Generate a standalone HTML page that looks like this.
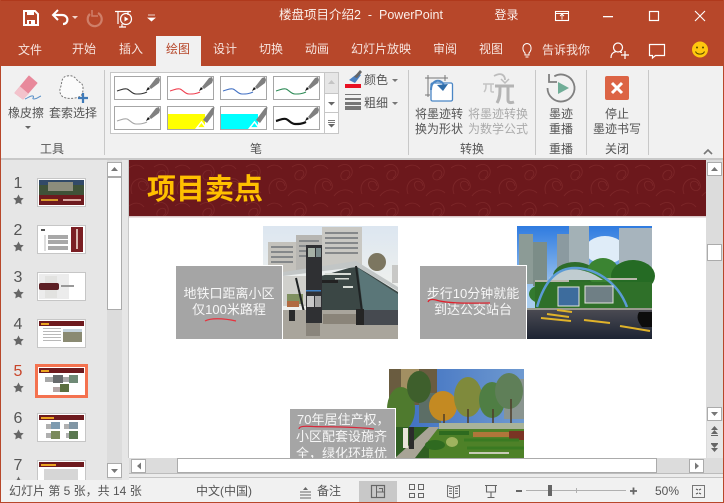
<!DOCTYPE html>
<html lang="zh"><head><meta charset="utf-8"><title>楼盘项目介绍2 - PowerPoint</title>
<style>
html,body{margin:0;padding:0;width:724px;height:503px;overflow:hidden;background:#f1f1f1}
body{position:relative;font-family:"Liberation Sans","Microsoft YaHei","Noto Sans CJK SC",sans-serif;font-size:12px;color:#444}
.a{position:absolute}
.t{position:absolute;white-space:nowrap;line-height:16px;height:16px;text-align:center}
.w{color:#f7e4de}
.g{color:#555}
.d{color:#aaa}
.sl{color:#f6f6f6;font-size:13px}
svg{position:absolute;overflow:visible}
</style></head><body>

<div class="a" style="left:0;top:0;width:724px;height:66px;background:#b7472a"></div>
<div class="a" style="left:156px;top:36px;width:45px;height:30px;background:#f1f1f1"></div>
<div class="a" style="left:0;top:66px;width:724px;height:92px;background:#f1f1f1"></div>
<div class="a" style="left:0;top:158px;width:724px;height:2px;background:#c8c8c8"></div>
<div class="a" style="left:1px;top:160px;width:128px;height:320px;background:#e6e6e6"></div>
<div class="a" style="left:107px;top:160px;width:15px;height:320px;background:#dcdcdc"></div>
<div class="a" style="left:129px;top:160px;width:577px;height:298px;background:#fff"></div>
<div class="a" style="left:706px;top:160px;width:17px;height:298px;background:#dcdcdc"></div>

<!-- title -->
<div class="t w" style="left:279px;top:7px;width:167px;font-size:12.5px;text-align:left;color:#fbeee9">楼盘项目介绍2&nbsp; -&nbsp; PowerPoint</div>
<div class="t w" style="left:494px;top:7px;width:25px;color:#fbeee9">登录</div>
<!-- tabs -->
<div class="t w" style="left:17px;top:42px;width:26px">文件</div>
<div class="t w" style="left:71px;top:41px;width:26px">开始</div>
<div class="t w" style="left:118px;top:41px;width:26px">插入</div>
<div class="t" style="left:165px;top:41px;width:26px;color:#b7472a">绘图</div>
<div class="t w" style="left:212px;top:41px;width:26px">设计</div>
<div class="t w" style="left:258px;top:41px;width:26px">切换</div>
<div class="t w" style="left:304px;top:41px;width:26px">动画</div>
<div class="t w" style="left:350px;top:41px;width:62px">幻灯片放映</div>
<div class="t w" style="left:432px;top:41px;width:26px">审阅</div>
<div class="t w" style="left:478px;top:41px;width:26px">视图</div>
<div class="t w" style="left:541px;top:42px;width:50px">告诉我你</div>

<!-- ribbon text -->
<div class="t g" style="left:7px;top:105px;width:38px">橡皮擦</div>
<div class="t g" style="left:48px;top:105px;width:50px">套索选择</div>
<div class="t g" style="left:39px;top:141px;width:26px">工具</div>
<div class="t g" style="left:249px;top:141px;width:14px">笔</div>
<div class="t g" style="left:363px;top:72px;width:26px">颜色</div>
<div class="t g" style="left:363px;top:95px;width:26px">粗细</div>
<div class="t g" style="left:414px;top:106px;width:50px">将墨迹转</div>
<div class="t g" style="left:414px;top:121px;width:50px">换为形状</div>
<div class="t d" style="left:467px;top:106px;width:62px">将墨迹转换</div>
<div class="t d" style="left:467px;top:121px;width:62px">为数学公式</div>
<div class="t g" style="left:459px;top:141px;width:26px">转换</div>
<div class="t g" style="left:548px;top:106px;width:26px">墨迹</div>
<div class="t g" style="left:548px;top:121px;width:26px">重播</div>
<div class="t g" style="left:548px;top:141px;width:26px">重播</div>
<div class="t g" style="left:604px;top:106px;width:26px">停止</div>
<div class="t g" style="left:592px;top:121px;width:50px">墨迹书写</div>
<div class="t g" style="left:604px;top:141px;width:26px">关闭</div>

<!-- ribbon & chrome graphics -->
<svg width="724" height="503" style="left:0;top:0" viewBox="0 0 724 503" fill="none">
<defs>
<g id="pen"><path d="M2-3L9-12L12-13L13-10L12-7L4-1Z" fill="#808080"/><path d="M-1 1L1-3L3-1Z" fill="#111"/></g>
</defs>
<rect x="0" y="0" width="724" height="1" fill="#b0391c"/>
<rect x="0" y="0" width="1" height="503" fill="#b7472a"/>
<rect x="723" y="0" width="1" height="503" fill="#b7472a"/>
<rect x="0" y="502" width="724" height="1" fill="#b7472a"/>
<!-- save -->
<path d="M24 11h11l3 3v11H24z" stroke="#fff" stroke-width="2"/><rect x="27" y="11" width="7" height="4" fill="#fff"/><rect x="27" y="20" width="8" height="5" fill="#fff"/><rect x="29" y="21" width="2" height="3" fill="#b7472a"/>
<!-- undo -->
<path d="M54 15h8c7 0 7 9 1 9" stroke="#fff" stroke-width="2.2"/><path d="M58 10l-5 5 5 5" stroke="#fff" stroke-width="2"/><path d="M72 16h6l-3 3z" fill="#f3d6cc"/>
<!-- redo dim -->
<path d="M98 13a7 7 0 1 1-8 1" stroke="#cf7f69" stroke-width="2.2"/><path d="M92 10v6h6" stroke="#cf7f69" stroke-width="1.5"/>
<!-- presenter -->
<path d="M115 11.500h16M118 12v12M128 12v3M122 24v3M119 27h7" stroke="#fff" stroke-width="1.200"/><circle cx="126" cy="19" r="5.500" stroke="#fff" stroke-width="1.200"/><path d="M124.500 16.500l4 2.500-4 2.500z" fill="#fff"/>
<path d="M148 15h7M148 18h7l-3.500 3z" fill="#fff" stroke="#fff" stroke-width=".7"/>
<!-- window controls -->
<rect x="555.500" y="11.500" width="13" height="9" stroke="#fff" stroke-width="1.100"/><path d="M562 19.500v-5M560 16l2-2 2 2M556 13.500h12" stroke="#fff" stroke-width=".9"/>
<rect x="603" y="16" width="10" height="1.300" fill="#fff"/>
<rect x="649.500" y="11.500" width="9" height="9" stroke="#fff" stroke-width="1.200"/>
<path d="M695 11l10 10M705 11l-10 10" stroke="#fff" stroke-width="1.100"/>
<!-- tell me bulb -->
<path d="M525 53c-3-3-3-9 2-9.500 5 .5 5 6.500 2 9.500v2h-4z" stroke="#fff" stroke-width="1"/><path d="M525.500 57h3" stroke="#fff"/>
<!-- person -->
<circle cx="618" cy="47.500" r="4.500" stroke="#fff" stroke-width="1.200"/><path d="M611 58c0-5 3-6 5-6.500M620 52l2 .5M621 55h8M625 51v8" stroke="#fff" stroke-width="1.200"/>
<!-- comment -->
<path d="M649.500 44.500h15v11h-9l-3 2.500v-2.500h-3z" stroke="#fff" stroke-width="1.200"/>
<!-- smiley -->
<circle cx="700" cy="49.500" r="8" fill="#ffc90e"/><circle cx="697" cy="47.500" r="1" fill="#5a4a00"/><circle cx="703" cy="47.500" r="1" fill="#5a4a00"/><path d="M695.500 51.500c1.500 3.500 7.500 3.500 9 0" stroke="#5a4a00"/>

<!-- eraser -->
<path d="M29 76L37 83L23 99L15 93Z" fill="#e8899b" stroke="#e8899b" stroke-linejoin="round"/>
<path d="M20 87L28 94L23 99L15 93Z" fill="#f3c3cc" stroke="#f3c3cc" stroke-linejoin="round"/>
<path d="M25 99c3-1 6-4 8-3s-2 3 1 3 4-2 7-3" stroke="#5b92c9" stroke-width="1"/>
<path d="M25 126h6l-3 3z" fill="#666"/>
<!-- lasso -->
<path d="M67 76c5-1 8 1 10 4s6 2 6 8-1 9-8 10-12 0-14-3c-2-4-1-6 0-9s0-9 6-10z" fill="#fbfbfb" stroke="#777" stroke-dasharray="2 1.500"/>
<path d="M83 94v10M78 99h10" stroke="#3f7ab8" stroke-width="2.200" transform="translate(0 -1)"/>
<!-- separators -->
<path d="M104.500 70v85M408.500 70v85M535.500 70v85M586.500 70v85M648.500 70v85" stroke="#c8c8c8"/>
<!-- gallery -->
<rect x="110.500" y="72.500" width="228" height="61" fill="#fff" stroke="#c6c6c6"/>
<rect x="324.500" y="72.500" width="14" height="21" fill="#e6e6e6" stroke="#c6c6c6"/>
<path d="M324.500 93.500h14M324.500 112.500h14M324.500 72v62" stroke="#c6c6c6"/>
<path d="M328 84l3.500-4 3.500 4z" fill="#c4c4c4"/>
<path d="M328 102h7l-3.500 3.500z" fill="#666"/>
<path d="M328 120.500h7M328 122.500h7" stroke="#777"/><path d="M328 124h7l-3.500 3.500z" fill="#666"/>
<g stroke="#a6a6a6" fill="#fff">
<rect x="114.500" y="76.500" width="46" height="23"/><rect x="167.500" y="76.500" width="46" height="23"/><rect x="220.500" y="76.500" width="46" height="23"/><rect x="273.500" y="76.500" width="46" height="23"/>
<rect x="114.500" y="106.500" width="46" height="23"/><rect x="167.500" y="106.500" width="46" height="23"/><rect x="220.500" y="106.500" width="46" height="23"/><rect x="273.500" y="106.500" width="46" height="23"/>
</g>
<rect x="168" y="114" width="37" height="15" fill="#ff0"/><rect x="221" y="114" width="37" height="15" fill="#0ff"/>
<g stroke-width="1.100">
<path d="M117 91c4-1 7-3 10-2s5 5 9 5 7 0 11-2" stroke="#333"/>
<path d="M170 91c4-1 7-3 10-2s5 5 9 5 7 0 11-2" stroke="#f04050"/>
<path d="M223 91c4-1 7-3 10-2s5 5 9 5 7 0 11-2" stroke="#4472c4"/>
<path d="M276 91c4-1 7-3 10-2s5 5 9 5 7 0 11-2" stroke="#2e8b57"/>
<path d="M117 121c4-1 7-3 10-2s5 5 9 5 7 0 11-2" stroke="#a6a6a6"/>
<path d="M276 121c4-1 7-3 10-2s5 5 9 5 7 0 11-2" stroke="#111" stroke-width="2.200"/>
</g>
<use href="#pen" x="147" y="90"/>
<use href="#pen" x="200" y="90"/>
<use href="#pen" x="253" y="90"/>
<use href="#pen" x="306" y="90"/>
<use href="#pen" x="147" y="120"/>
<use href="#pen" x="306" y="120"/>
<path d="M196 128.500l5.500-7 5.500 7z" fill="#fff" stroke="#fff"/><path d="M197.500 127.500l4-5 3.800 5z" fill="#ff0" stroke="#fff" stroke-width=".7"/>
<path d="M249 128.500l5.500-7 5.500 7z" fill="#fff" stroke="#fff"/><path d="M250.500 127.500l4-5 3.800 5z" fill="#0ff" stroke="#fff" stroke-width=".7"/>
<path d="M203 120L212 108L214.500 107L213.500 114L207 123ZM256 120L265 108L267.500 107L266.500 114L260 123Z" fill="#808080"/>
<!-- colour / thickness -->
<path d="M349 80l9-7 3 2-6 8z" fill="#4a7fc0"/><path d="M354 77l6-7 2 2-5 6z" fill="#666"/>
<rect x="345" y="84" width="16" height="4" fill="#e81123"/>
<rect x="345" y="94" width="16" height="1" fill="#777"/><rect x="345" y="98" width="16" height="2" fill="#777"/><rect x="345" y="102" width="16" height="3" fill="#777"/><rect x="345" y="106" width="16" height="4" fill="#777"/>
<path d="M392 79h6l-3 3zM392 102h6l-3 3z" fill="#777"/>
<!-- ink to shape -->
<path d="M428 75v22M425 95h5M425 78h23M445 75v6" stroke="#777"/>
<rect x="431" y="83" width="21.500" height="18" rx="1.500" fill="#fff" stroke="#4a86c5" stroke-width="1.300"/>
<path d="M431 90c0-11 11-12 13-4" stroke="#4a86c5" stroke-width="2"/><path d="M437 85l6 6 5-7z" fill="#2f6ca8"/>
<!-- pi -->
<path d="M483 84h11M486 84c0 4 0 6-2 8M491 84v7c0 1 1 1 3 1" stroke="#c4c4c4" stroke-width="1.500"/>
<path d="M495 86h19M500 86c0 7 0 12-3 17M508 86v14c0 3 3 3 6 2" stroke="#b4b4b4" stroke-width="3"/>
<path d="M494 76c7-4 11-1 11 4" stroke="#bdbdbd" stroke-width="1.800"/><path d="M501 79l4 4 4-4" stroke="#bdbdbd" stroke-width="1.500"/>
<!-- replay -->
<path d="M554.300 76.300A13.500 13.500 0 1 1 547.500 88" stroke="#808080" stroke-width="1.800"/><path d="M549 74v8h8" stroke="#808080" stroke-width="1.800"/>
<path d="M558 82l11 6-11 6z" fill="#70ad97"/>
<!-- stop -->
<rect x="605" y="76" width="24" height="24" rx="2" fill="#dc6445"/>
<path d="M612 83l10 10M622 83l-10 10" stroke="#fff" stroke-width="3"/>
<path d="M704 154l4-4 4 4" stroke="#777" stroke-width="1.600"/>

<!-- slide area edge lines -->
<rect x="122" y="160" width="7" height="320" fill="#e6e6e6"/>
<rect x="128" y="160" width="1" height="298" fill="#c8c8c8"/>

<!-- slide scroll left -->
<g fill="#fff" stroke="#ababab"><rect x="107.500" y="162.500" width="14" height="14"/><rect x="107.500" y="177.500" width="14" height="132"/><rect x="107.500" y="463.500" width="14" height="14"/></g>
<path d="M111 171l3.500-4 3.500 4z" fill="#777"/><path d="M111 469h7l-3.500 4z" fill="#777"/>

<!-- thumbnails -->
<g>
<rect x="37.500" y="178.500" width="48" height="28" fill="#fff" stroke="#c6c6c6"/>
<rect x="39" y="180" width="45" height="16" fill="#3f5238"/><rect x="39" y="180" width="45" height="5" fill="#324a68"/><rect x="48" y="182" width="25" height="9" fill="#8d8d7c"/>
<rect x="39" y="195" width="45" height="10" fill="#6e1a1e"/><rect x="41" y="199" width="17" height="2" fill="#d79a2c"/><rect x="63" y="199" width="18" height="2" fill="#d8a8a0"/>

<rect x="37.500" y="225.500" width="48" height="28" fill="#fff" stroke="#c6c6c6"/>
<rect x="71" y="227" width="12" height="25" fill="#7b1f24"/><rect x="76" y="229" width="2" height="20" fill="#d9b7b0"/>
<rect x="48" y="235" width="20" height="4" fill="#a8a8a8"/><rect x="48" y="240" width="20" height="4" fill="#a8a8a8"/><rect x="48" y="246" width="20" height="4" fill="#a8a8a8"/>
<rect x="41" y="229" width="4" height="2" fill="#555"/><rect x="44" y="235" width="2" height="16" fill="#ddd"/>

<rect x="37.500" y="272.500" width="48" height="28" fill="#fff" stroke="#c6c6c6"/>
<rect x="39" y="274" width="30" height="25" fill="#ececec"/><rect x="45" y="276" width="12" height="22" fill="#e2e2e0"/>
<rect x="39" y="283" width="20" height="7" rx="2" fill="#5c1f24"/><rect x="61" y="285" width="13" height="2" fill="#999"/>

<rect x="37.500" y="319.500" width="48" height="28" fill="#fff" stroke="#c6c6c6"/>
<rect x="39" y="321" width="45" height="5" fill="#6e1a1e"/><rect x="41" y="323" width="8" height="2" fill="#eaa420"/>
<g fill="#b9b9b9"><rect x="43" y="328" width="18" height="1"/><rect x="43" y="331" width="18" height="1"/><rect x="43" y="334" width="18" height="1"/><rect x="43" y="337" width="18" height="1"/><rect x="43" y="340" width="18" height="1"/></g>
<rect x="63" y="329" width="19" height="13" fill="#8a8a72"/><rect x="63" y="329" width="19" height="3" fill="#c5d3dd"/>

<rect x="36.500" y="365.500" width="50" height="31" fill="#fff" stroke="#f4724f" stroke-width="3"/>
<rect x="39" y="368" width="45" height="5" fill="#6e1a1e"/><rect x="41" y="370" width="8" height="2" fill="#eaa420"/>
<rect x="45" y="377" width="9" height="5" fill="#a8a8a8"/><rect x="53" y="375" width="10" height="8" fill="#676a6c"/>
<rect x="63" y="377" width="7" height="5" fill="#a8a8a8"/><rect x="69" y="375" width="9" height="8" fill="#6f8a76"/>
<rect x="53" y="387" width="7" height="5" fill="#b4a6a6"/><rect x="60" y="384" width="9" height="8" fill="#5c7040"/>

<rect x="37.500" y="413.500" width="48" height="28" fill="#fff" stroke="#c6c6c6"/>
<rect x="39" y="415" width="45" height="5" fill="#6e1a1e"/><rect x="41" y="417" width="13" height="2" fill="#eaa420"/>
<rect x="46" y="424" width="5" height="5" fill="#b0b0b0"/><rect x="51" y="422" width="9" height="7" fill="#7d9bb0"/><rect x="64" y="424" width="5" height="5" fill="#b0b0b0"/><rect x="69" y="422" width="9" height="7" fill="#8096a5"/>
<rect x="46" y="433" width="5" height="5" fill="#b0b0b0"/><rect x="51" y="431" width="9" height="8" fill="#7a8a5c"/><rect x="66" y="433" width="5" height="5" fill="#b0b0b0"/><rect x="69" y="431" width="9" height="8" fill="#5a7850"/>

<rect x="37.500" y="460.500" width="48" height="28" fill="#fff" stroke="#c6c6c6"/>
<rect x="39" y="462" width="45" height="5" fill="#6e1a1e"/><rect x="41" y="464" width="15" height="2" fill="#eaa420"/>
<rect x="44" y="469" width="34" height="11" fill="#d6d6d6"/>
</g>

<!-- stars -->
<g fill="#666">
<path id="st" d="M18.500 194.500l1.600 3.300 3.600.5-2.600 2.500.6 3.600-3.200-1.700-3.200 1.700.6-3.600-2.600-2.500 3.600-.5z"/>
<use href="#st" y="47"/><use href="#st" y="94"/><use href="#st" y="141"/><use href="#st" y="188"/><use href="#st" y="235"/><use href="#st" y="282"/>
</g>

<!-- right scrollbar -->
<rect x="707" y="421" width="16" height="37" fill="#e6e6e6"/>
<g fill="#fff" stroke="#ababab"><rect x="707.500" y="162.500" width="14" height="13"/><rect x="707.500" y="244.500" width="14" height="16"/><rect x="707.500" y="407.500" width="14" height="13"/></g>
<path d="M711 171l3.500-4 3.500 4z" fill="#777"/><path d="M711 412h7l-3.500 4z" fill="#777"/>
<path d="M711 430l3.500-4 3.500 4zM711 434l3.500-4 3.500 4z" fill="#666"/><path d="M711 444h7l-3.500 4zM711 448h7l-3.500 4z" fill="#666"/><rect x="711" y="435" width="7" height="1" fill="#666"/><rect x="711" y="443" width="7" height="1" fill="#666"/>

<!-- bottom scroll -->
<rect x="129" y="458" width="594" height="15" fill="#dcdcdc"/>
<rect x="131.500" y="459.500" width="14" height="13" fill="#fff" stroke="#ababab"/>
<rect x="177.500" y="458.500" width="479" height="14" fill="#fff" stroke="#ababab"/>
<rect x="689.500" y="459.500" width="14" height="13" fill="#fff" stroke="#ababab"/>
<path d="M141 462.500v7l-4-3.500zM695 462.500v7l4-3.500z" fill="#777"/>
<path d="M129 473.500h594" stroke="#bcbcbc"/>
<rect x="129" y="474" width="594" height="3" fill="#ececec"/>
<path d="M129 477.500h594" stroke="#c4c4c4"/>
<rect x="129" y="478" width="594" height="3" fill="#f1f1f1"/>
<rect x="1" y="480" width="722" height="22" fill="#f1f1f1"/>

<!-- status icons -->
<rect x="359" y="481" width="38" height="21" fill="#c8c8c8"/>
<path d="M300 492h11M300 495h11M300 498h11" stroke="#666"/><path d="M303 490l2.500-3 2.500 3z" fill="#666"/>
<rect x="371.500" y="485.500" width="13" height="12" stroke="#666" stroke-width="1.200"/><path d="M376.500 486v11M376.500 492h8M379 488.500h3.500v3.500H379" stroke="#666"/>
<rect x="409.500" y="484.500" width="5" height="5" stroke="#666"/><rect x="418.500" y="484.500" width="5" height="5" stroke="#666"/><rect x="409.500" y="493.500" width="5" height="4" stroke="#666"/><rect x="418.500" y="493.500" width="5" height="4" stroke="#666"/>
<path d="M447.500 485.500l6 1.500 6-1.500v11l-6 1.500-6-1.500zM453.500 487v11M449 488.500h3M449 491h3M449 493.500h3M455 488.500h3M455 491h3M455 493.500h3" stroke="#666" stroke-width=".9"/>
<path d="M485 485.500h12M486.500 486v6h9v-6M491 492v5M487.500 497.500h7" stroke="#666" stroke-width="1.100"/>
<rect x="516" y="490" width="6" height="2" fill="#666"/>
<path d="M526 490.500h100" stroke="#b0b0b0"/><path d="M576.500 488v5" stroke="#b0b0b0"/>
<rect x="548" y="485" width="4" height="11" fill="#666"/>
<path d="M630 491h7M633.500 487.500v7" stroke="#666" stroke-width="1.800"/>
<rect x="692.500" y="485.500" width="12" height="12" stroke="#777"/><path d="M696 489l2 1M701 489l-2 1M696 494l2-1M701 494l-2-1" stroke="#555"/>
</svg>

<!-- numbers -->
<div class="t" style="left:8px;top:175px;width:20px;font-size:16px;line-height:18px;color:#555">1</div>
<div class="t" style="left:8px;top:222px;width:20px;font-size:16px;line-height:18px;color:#555">2</div>
<div class="t" style="left:8px;top:269px;width:20px;font-size:16px;line-height:18px;color:#555">3</div>
<div class="t" style="left:8px;top:316px;width:20px;font-size:16px;line-height:18px;color:#555">4</div>
<div class="t" style="left:8px;top:363px;width:20px;font-size:16px;line-height:18px;color:#c8452a">5</div>
<div class="t" style="left:8px;top:410px;width:20px;font-size:16px;line-height:18px;color:#555">6</div>
<div class="t" style="left:8px;top:457px;width:20px;font-size:16px;line-height:18px;color:#555">7</div>

<!-- slide -->
<div class="a" style="left:129px;top:160px;width:577px;height:298px;overflow:hidden;background:#fff">
  <svg width="577" height="298" style="left:0;top:0" viewBox="0 0 577 298">
    <defs>
      <pattern id="dm" width="46" height="38" patternUnits="userSpaceOnUse">
        <path d="M3 34c-5-13 10-20 15-12s-5 12-8 5 7-8 8-1M25 7c11-8 19 5 11 11s-11-4-5-7 8 4 3 7M21 36c5-7 14-8 19-3M0 8c5-4 11-4 15 1" fill="none" stroke="#7d2729" stroke-width=".8"/>
      </pattern>
      <linearGradient id="sky1" x1="0" y1="0" x2="0" y2="1"><stop offset="0" stop-color="#dce6f0"/><stop offset=".5" stop-color="#eef0ee"/></linearGradient>
      <linearGradient id="sky2" x1="0" y1="0" x2="0" y2="1"><stop offset="0" stop-color="#2f7be0"/><stop offset=".6" stop-color="#a9cdef"/></linearGradient>
      <linearGradient id="rd" x1="0" y1="0" x2="0" y2="1"><stop offset="0" stop-color="#4a4a52"/><stop offset="1" stop-color="#1d2433"/></linearGradient>
      <linearGradient id="sky3" x1="0" y1="0" x2="1" y2="0"><stop offset="0" stop-color="#3a6cc0"/><stop offset="1" stop-color="#6f9ad0"/></linearGradient>
    </defs>
    <rect width="577" height="56" fill="#6c181c"/>
    <rect width="577" height="56" fill="url(#dm)"/>
    <rect y="56" width="577" height="1.500" fill="#d9c6c7"/>

    <!-- photo 1 -->
    <g transform="translate(134 66)">
      <rect width="135" height="113" fill="url(#sky1)"/>
      <rect x="5" y="16" width="29" height="30" fill="#c4c2bc"/>
      <rect x="33" y="9" width="26" height="37" fill="#b7b6b2"/>
      <rect x="59" y="1" width="40" height="40" fill="#c9c8c3"/>
      <g fill="#85888a"><rect x="8" y="20" width="22" height="2"/><rect x="8" y="25" width="22" height="2"/><rect x="8" y="30" width="22" height="2"/><rect x="8" y="35" width="22" height="2"/><rect x="36" y="14" width="20" height="2"/><rect x="36" y="19" width="20" height="2"/><rect x="36" y="24" width="20" height="2"/><rect x="36" y="29" width="20" height="2"/><rect x="62" y="6" width="33" height="2"/><rect x="62" y="11" width="33" height="2"/><rect x="62" y="16" width="33" height="2"/><rect x="62" y="21" width="33" height="2"/><rect x="62" y="26" width="33" height="2"/></g>
      <ellipse cx="114" cy="36" rx="9" ry="9" fill="#7c7660"/>
      <rect x="129" y="39" width="6" height="18" fill="#c8c8c6"/>
      <rect x="20" y="50" width="40" height="30" fill="#d0d0cc"/>
      <rect x="24" y="68" width="16" height="10" fill="#7f9060"/>
      <rect x="24" y="75" width="12" height="6" fill="#b06a40"/>
      <path d="M58 50L93 40L135 66V84H100L92 88H58Z" fill="#3b4745"/>
      <path d="M95 42L135 68V84H100Z" fill="#5a7678"/>
      <g fill="#d8dcd6"><rect x="62" y="47" width="26" height="2"/><rect x="72" y="52" width="14" height="1.500"/><rect x="80" y="60" width="10" height="2"/></g>
      <rect x="57" y="54" width="18" height="3" fill="#222"/>
      <path d="M20 46L93 35L135 61V65L94 41L20 50Z" fill="#c2c6c6"/>
      <path d="M33 52l8 34M93 40l6 46" stroke="#1f2324" stroke-width="2"/>
      <rect x="0" y="84" width="135" height="29" fill="#a9a59c"/>
      <rect x="60" y="88" width="34" height="10" fill="#8a8479"/>
      <rect x="97" y="84" width="38" height="15" fill="#464a50"/>
      <rect x="93" y="83" width="8" height="16" fill="#252525"/>
      <rect x="26" y="84" width="6" height="11" fill="#2a2a2a"/>
      <rect x="43" y="19" width="16" height="78" fill="#2f3033"/>
      <rect x="43" y="97" width="14" height="13" fill="#8a857c"/>
      <rect x="45" y="22" width="7" height="9" fill="#a6b0a6"/><rect x="53" y="22" width="5" height="9" fill="#7a8a8c"/>
      <rect x="43" y="64" width="15" height="1.500" fill="#3f7ec0"/>
      <rect x="44" y="70" width="7" height="11" fill="#c8c8c8"/><rect x="52" y="70" width="6" height="11" fill="#a5a5a5"/>
    </g>
    <rect x="47" y="106" width="106" height="73" fill="#a5a5a5"/>
    <path d="M47 105.500h106.500v73.500" fill="none" stroke="#fff"/>

    <!-- photo 2 -->
    <g transform="translate(388 66)">
      <rect width="135" height="113" fill="url(#sky2)"/>
      <ellipse cx="88" cy="24" rx="20" ry="14" fill="#dfecf8"/>
      <rect x="2" y="8" width="14" height="50" fill="#8c9b96"/><rect x="16" y="16" width="14" height="44" fill="#7c8d88"/>
      <rect x="40" y="8" width="14" height="45" fill="#8b9aa0"/><rect x="52" y="0" width="20" height="48" fill="#a3b1b6"/>
      <rect x="102" y="2" width="33" height="46" fill="#a7b4bd"/>
      <ellipse cx="58" cy="50" rx="22" ry="14" fill="#2d6c2a"/><ellipse cx="86" cy="46" rx="16" ry="14" fill="#3b8432"/><ellipse cx="116" cy="50" rx="22" ry="16" fill="#256b24"/><ellipse cx="28" cy="68" rx="16" ry="10" fill="#337a2f"/>
      <rect x="18" y="56" width="117" height="26" fill="#2f7029"/>
      <path d="M0 82h135v4H0z" fill="#9a9a8e"/>
      <rect x="0" y="84" width="135" height="29" fill="url(#rd)"/>
      <path d="M32 52C46 40 66 40 86 54l-54 0z" fill="#c0ccd0"/>
      <path d="M18 55h34M88 53h32" stroke="#b8b7ac" stroke-width="2"/>
      <path d="M20 81C28 54 40 42 58 42s42 12 52 39" fill="none" stroke="#5b9bd5" stroke-width="2.500"/>
      <rect x="41" y="61" width="21" height="19" fill="#3d6c9d" stroke="#e6e6de"/>
      <rect x="68" y="60" width="28" height="17" fill="#6f7f85" stroke="#e6e6de"/>
      <path d="M30 88l22 3M24 92l30 3M67 94l26 3M103 100l30 5M40 84l15 2" stroke="#e0b32a" stroke-width="2"/>
      <path d="M122 86h13v15h-10c-4-5-6-10-3-15z" fill="#0c0c0c"/>
    </g>
    <rect x="291" y="106" width="106" height="73" fill="#a5a5a5"/>
    <path d="M291 105.500h106.500v73.500" fill="none" stroke="#fff"/>

    <!-- photo 3 -->
    <g transform="translate(260 209)">
      <rect width="135" height="89" fill="url(#sky3)"/>
      <path d="M0 0h48v36H0z" fill="#6a5c40"/><rect x="12" y="0" width="18" height="26" fill="#a28f62"/>
      <rect x="115" y="10" width="20" height="40" fill="#8a9590"/>
      <rect x="30" y="24" width="22" height="30" fill="#5c6e66"/>
      <ellipse cx="12" cy="40" rx="14" ry="22" fill="#4f7a2e"/>
      <ellipse cx="30" cy="18" rx="12" ry="16" fill="#3e5f2c"/>
      <ellipse cx="54" cy="37" rx="14" ry="15" fill="#c48a22"/>
      <ellipse cx="79" cy="28" rx="14" ry="20" fill="#7f8a3c"/>
      <ellipse cx="103" cy="31" rx="13" ry="18" fill="#4f7e44"/>
      <ellipse cx="120" cy="22" rx="14" ry="18" fill="#5f7f58"/>
      <path d="M79 40v22M55 45v14M104 40v18M122 30v28" stroke="#4e3c28" stroke-width="1.500"/>
      <rect x="50" y="54" width="85" height="9" fill="#a9b39a"/>
      <rect x="0" y="60" width="135" height="29" fill="#4e8128"/>
      <rect x="0" y="58" width="40" height="31" fill="#2f5e22"/>
      <path d="M6 89L40 58H50L26 89Z" fill="#a8a496"/>
      <rect x="84" y="63" width="36" height="5" fill="#b0763a"/>
      <rect x="120" y="62" width="15" height="9" fill="#7a3424"/>
      <path d="M50 62h30v4H50z" fill="#2d6a1f"/>
      <rect x="14" y="59" width="5" height="20" fill="#e8e4da"/><rect x="20" y="58" width="5" height="22" fill="#2b2b2b"/>
      <ellipse cx="63" cy="73" rx="6" ry="5" fill="#9fb35e"/><ellipse cx="46" cy="76" rx="10" ry="5" fill="#2f6a20"/>
      <path d="M75 71h55M78 79h57" stroke="#3a7a22" stroke-width="3"/>
      <path d="M80 84h40" stroke="#c8cbb6" stroke-width="2"/>
    </g>
    <rect x="161" y="249" width="105" height="49" fill="#a5a5a5"/>
    <path d="M161 248.500h105.500V298" fill="none" stroke="#fff"/>
  </svg>
  <div class="t" style="left:18px;top:13px;width:116px;height:34px;line-height:34px;font-size:29px;font-weight:bold;color:#ffc000;text-align:left">项目卖点</div>
  <div class="t sl" style="left:47px;top:126px;width:106px">地铁口距离小区</div>
  <div class="t sl" style="left:47px;top:142px;width:106px">仅100米路程</div>
  <div class="t sl" style="left:291px;top:126px;width:106px">步行10分钟就能</div>
  <div class="t sl" style="left:291px;top:142px;width:106px">到达公交站台</div>
  <div class="t sl" style="left:168px;top:252px;text-align:left">70年居住产权，</div>
  <div class="t sl" style="left:167px;top:269px;text-align:left">小区配套设施齐</div>
  <div class="t sl" style="left:167px;top:286px;text-align:left">全，绿化环境优</div>
  <svg width="577" height="298" style="left:0;top:0" viewBox="0 0 577 298">
    <path d="M76 161c5-3 18-3 31 0" fill="none" stroke="#e8303c" stroke-width="1.200"/>
    <path d="M299 142c1-3 4-3 8-2 12 4 38 3 54 3" fill="none" stroke="#e0202c" stroke-width="1.200"/>
    <path d="M170 269c0-3 6-3 14-2.500 16 .5 40 0 61 2.500" fill="none" stroke="#d8283a" stroke-width="1.200"/>
  </svg>
</div>

<!-- status text -->
<div class="t" style="left:9px;top:483px;width:140px;font-size:12px;text-align:left;color:#555;white-space:pre">幻灯片 第 5 张，共 14 张</div>
<div class="t" style="left:196px;top:483px;width:58px;font-size:12px;text-align:left;color:#555">中文(中国)</div>
<div class="t" style="left:316px;top:483px;width:26px;color:#555">备注</div>
<div class="t" style="left:654px;top:483px;width:26px;color:#555">50%</div>
</body></html>
